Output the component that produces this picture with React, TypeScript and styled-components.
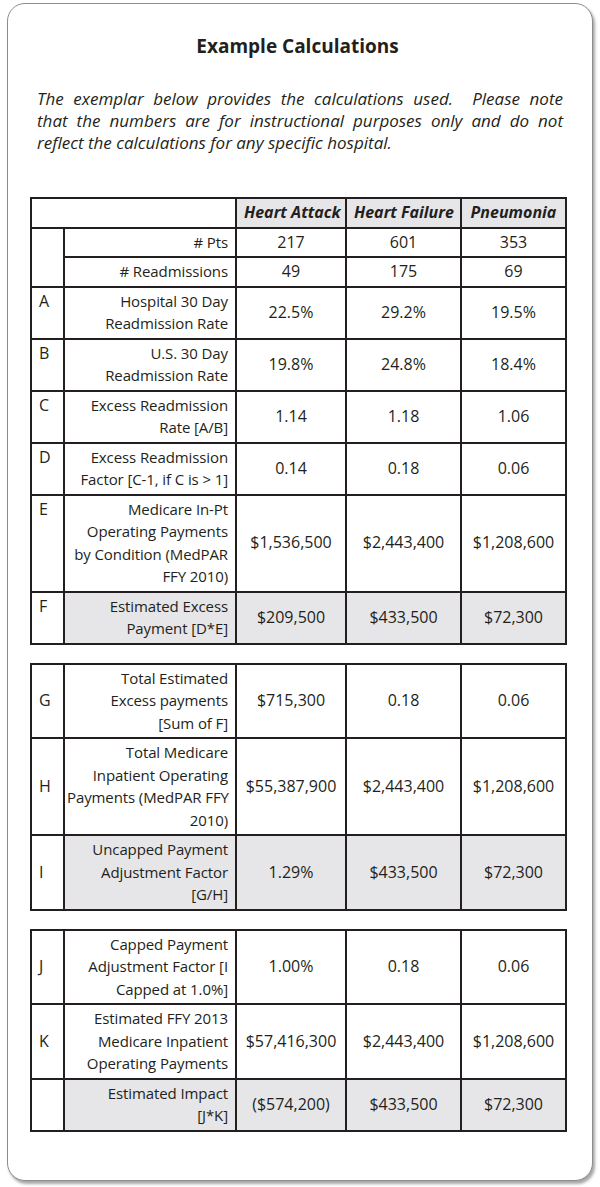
import React from "react";
import styled, {createGlobalStyle} from "styled-components";

const GlobalStyle = createGlobalStyle`
  html, body {
    margin: 0;
    padding: 0;
    background: #fff;
  }
  body {
    font-family: "Open Sans", "Noto Sans", sans-serif;
    color: #231f20;
  }
`

const Page = styled.div`
  width: 600px;
  box-sizing: border-box;
  padding: 3px 7px 6px 7px;
`

const Card = styled.div`
  height: 1178px;
  box-sizing: border-box;
  border: 1px solid #8c8c8c;
  border-radius: 18px;
  box-shadow: 2px 3px 3px rgba(0, 0, 0, 0.35);
  background: #fff;
  padding: 30px 27px 0 22px;
  display: flex;
  flex-direction: column;
`

const Title = styled.h1`
  margin: 0;
  font-size: 19px;
  line-height: 24px;
  font-weight: 700;
  text-align: center;
`

const Intro = styled.div`
  margin: 30px 2px 43px 7px;
  font-size: 17px;
  line-height: 22px;
  font-style: italic;
`

const IntroLine = styled.div<{$last?: boolean}>`
  text-align: ${p => (p.$last ? "left" : "justify")};
  text-align-last: ${p => (p.$last ? "left" : "justify")};
  white-space: ${p => (p.$last ? "nowrap" : "normal")};
`

const Tables = styled.div`
  display: flex;
  flex-direction: column;
  gap: 18px;
`

const Grid = styled.table`
  width: 535px;
  border-collapse: collapse;
  table-layout: fixed;
  font-size: 15px;
  line-height: 22.5px;

  td, th {
    border: 2px solid #231f20;
    padding: 2px 7px 3px 7px;
    white-space: nowrap;
  }
`

const HeadCell = styled.th<{$blank?: boolean}>`
  background: ${p => (p.$blank ? "#fff" : "#e6e6e8")};
  font-weight: 700;
  font-style: italic;
  font-size: 16px;
  text-align: center;
`

const LetterCell = styled.td<{$top?: boolean}>`
  vertical-align: ${p => (p.$top ? "top" : "middle")};
  text-align: left;
  font-size: 16px;
  background: #fff;
`

const LabelCell = styled.td<{$shaded?: boolean}>`
  && {
    padding-left: 2px;
  }
  text-align: right;
  vertical-align: middle;
  letter-spacing: -0.1px;
  background: ${p => (p.$shaded ? "#e6e6e8" : "#fff")};
`

const ValueCell = styled.td<{$shaded?: boolean}>`
  && {
    padding-left: 2px;
    padding-right: 2px;
  }
  text-align: center;
  vertical-align: middle;
  font-size: 16px;
  background: ${p => (p.$shaded ? "#e6e6e8" : "#fff")};
`

type Row = {
    letter: string;
    label: string[];
    values: string[];
    shaded?: boolean;
};

const countRows: Row[] = [
    {letter: "", label: ["# Pts"], values: ["217", "601", "353"]},
    {letter: "", label: ["# Readmissions"], values: ["49", "175", "69"]},
];

const firstRows: Row[] = [
    {letter: "A", label: ["Hospital 30 Day", "Readmission Rate"], values: ["22.5%", "29.2%", "19.5%"]},
    {letter: "B", label: ["U.S. 30 Day", "Readmission Rate"], values: ["19.8%", "24.8%", "18.4%"]},
    {letter: "C", label: ["Excess Readmission", "Rate [A/B]"], values: ["1.14", "1.18", "1.06"]},
    {letter: "D", label: ["Excess Readmission", "Factor [C-1, if C is > 1]"], values: ["0.14", "0.18", "0.06"]},
    {
        letter: "E",
        label: ["Medicare In-Pt", "Operating Payments", "by Condition (MedPAR", "FFY 2010)"],
        values: ["$1,536,500", "$2,443,400", "$1,208,600"],
    },
    {letter: "F", label: ["Estimated Excess", "Payment [D*E]"], values: ["$209,500", "$433,500", "$72,300"], shaded: true},
];

const secondRows: Row[] = [
    {letter: "G", label: ["Total Estimated", "Excess payments", "[Sum of F]"], values: ["$715,300", "0.18", "0.06"]},
    {
        letter: "H",
        label: ["Total Medicare", "Inpatient Operating", "Payments (MedPAR FFY", "2010)"],
        values: ["$55,387,900", "$2,443,400", "$1,208,600"],
    },
    {
        letter: "I",
        label: ["Uncapped Payment", "Adjustment Factor", "[G/H]"],
        values: ["1.29%", "$433,500", "$72,300"],
        shaded: true,
    },
];

const thirdRows: Row[] = [
    {letter: "J", label: ["Capped Payment", "Adjustment Factor [I", "Capped at 1.0%]"], values: ["1.00%", "0.18", "0.06"]},
    {
        letter: "K",
        label: ["Estimated FFY 2013", "Medicare Inpatient", "Operating Payments"],
        values: ["$57,416,300", "$2,443,400", "$1,208,600"],
    },
    {letter: "", label: ["Estimated Impact", "[J*K]"], values: ["($574,200)", "$433,500", "$72,300"], shaded: true},
];

const introLines = [
    "The exemplar below provides the calculations used.\u00a0 Please note",
    "that the numbers are for instructional purposes only and do not",
    "reflect the calculations for any specific hospital.",
];

function Label({lines}: {lines: string[]}) {
    return (
        <>
            {lines.map((l, i) => (
                <React.Fragment key={i}>
                    {i > 0 && <br/>}
                    {l}
                </React.Fragment>
            ))}
        </>
    );
}

function Cols() {
    return (
        <colgroup>
            <col style={{width: 33}}/>
            <col style={{width: 172}}/>
            <col style={{width: 110}}/>
            <col style={{width: 115}}/>
            <col style={{width: 105}}/>
        </colgroup>
    );
}

function DataRow({row, top, noLetter}: {row: Row; top?: boolean; noLetter?: boolean}) {
    return (
        <tr>
            {!noLetter && <LetterCell $top={top}>{row.letter}</LetterCell>}
            <LabelCell $shaded={row.shaded}><Label lines={row.label}/></LabelCell>
            {row.values.map((v, i) => (
                <ValueCell key={i} $shaded={row.shaded}>{v}</ValueCell>
            ))}
        </tr>
    );
}

function Section({rows}: {rows: Row[]}) {
    return (
        <Grid>
            <Cols/>
            <tbody>
                {rows.map((r, i) => <DataRow key={i} row={r}/>)}
            </tbody>
        </Grid>
    );
}

export default function App() {
    return (
        <Page>
            <GlobalStyle/>
            <Card>
                <Title>Example Calculations</Title>
                <Intro>
                    {introLines.map((l, i) => (
                        <IntroLine key={i} $last={i === introLines.length - 1}>{l}</IntroLine>
                    ))}
                </Intro>
                <Tables>
                    <Grid>
                        <Cols/>
                        <thead>
                            <tr>
                                <HeadCell $blank colSpan={2}/>
                                <HeadCell>Heart Attack</HeadCell>
                                <HeadCell>Heart Failure</HeadCell>
                                <HeadCell>Pneumonia</HeadCell>
                            </tr>
                        </thead>
                        <tbody>
                            <tr>
                                <LetterCell rowSpan={2}/>
                                <LabelCell>{countRows[0].label[0]}</LabelCell>
                                {countRows[0].values.map((v, i) => <ValueCell key={i}>{v}</ValueCell>)}
                            </tr>
                            <DataRow row={countRows[1]} noLetter/>
                            {firstRows.map((r, i) => <DataRow key={i} row={r} top/>)}
                        </tbody>
                    </Grid>
                    <Section rows={secondRows}/>
                    <Section rows={thirdRows}/>
                </Tables>
            </Card>
        </Page>
    );
}
